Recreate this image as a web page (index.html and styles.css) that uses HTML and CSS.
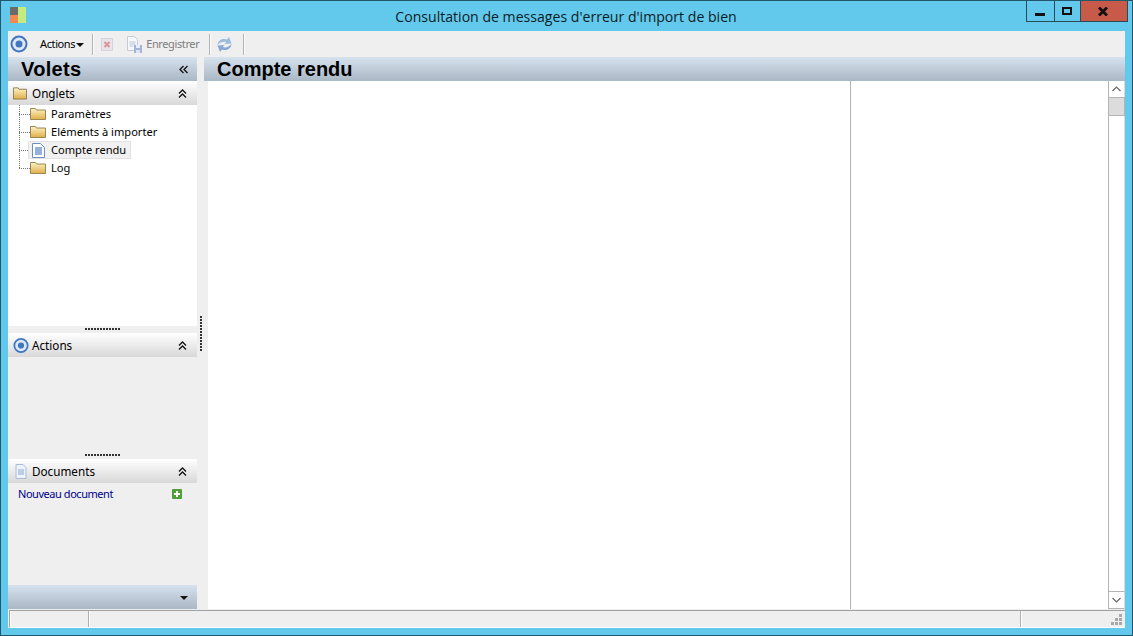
FILE: index.html
```html
<!DOCTYPE html>
<html lang="fr">
<head>
<meta charset="utf-8">
<title>Consultation de messages d'erreur d'import de bien</title>
<link rel="stylesheet" href="styles.css">
</head>
<body>
<div class="window">
  <header class="titlebar">
    <svg class="app-logo" width="16" height="16" viewBox="0 0 16 16"><rect x="0" y="0" width="8" height="8" fill="#6b6b6b"/><rect x="0" y="8" width="8" height="8" fill="#f08a50"/><rect x="8" y="0" width="8" height="16" fill="#c4ea80"/></svg>
    <div class="title">Consultation de messages d'erreur d'import de bien</div>
    <div class="controls">
      <div class="ctl ctl-min"><span class="min-glyph"></span></div>
      <div class="ctl ctl-max"><span class="max-glyph"></span></div>
      <div class="ctl ctl-close">
        <svg width="10" height="9" viewBox="0 0 10 9"><path d="M1 .5 9 8.500M9 .5 1 8.500" stroke="#111" stroke-width="2.800" fill="none"/></svg>
      </div>
    </div>
  </header>
  <div class="client">
    <div class="toolbar">
      <svg class="tb-target" width="18" height="18" viewBox="0 0 18 18"><use href="#target"/></svg>
      <span class="tb-actions">Actions</span><span class="caret"></span>
      <span class="sep sep-a"></span>
      <svg class="tb-delete" width="14" height="15" viewBox="0 0 14 15"><path d="M1.500 1.500h11v12h-11z" fill="#e9e4e8" stroke="#d4d2da"/><path d="M4.500 5l5 5M9.500 5l-5 5" stroke="#dd929b" stroke-width="2"/></svg>
      <svg class="tb-save" width="17" height="17" viewBox="0 0 17 17"><path d="M1.500 .5h7l3 3v11h-10z" fill="#f4f7fb" stroke="#c3ccd8"/><path d="M3.500 6h6M3.500 8h6M3.500 10h4" stroke="#b9c6d8"/><rect x="8" y="9" width="8" height="8" fill="#a3b5d6"/><rect x="10" y="9" width="4" height="3" fill="#e8edf5"/><rect x="10" y="14" width="4" height="3" fill="#dfe5f0"/></svg>
      <span class="tb-save-label">Enregistrer</span>
      <span class="sep sep-b"></span>
      <svg class="tb-refresh" width="17" height="17" viewBox="0 0 17 17"><path d="M1.500 9C1.800 4.500 6 1.800 11 3.500L13 1l2.500 6.500-7 .5 1.800-2C7 5 4 6 1.500 9z" fill="#9dbbdc"/><path d="M15.500 8C15.200 12.500 11 15.200 6 13.500L4 16l-2.500-6.500 7-.5L6.700 11C10 12 13 11 15.500 8z" fill="#86a9d2"/></svg>
      <span class="sep sep-c"></span>
    </div>
    <div class="workspace">
      <aside class="panes">
        <div class="panes-head"><span class="panes-title">Volets</span><svg class="chev-left" width="9" height="9" viewBox="0 0 9 9"><path d="M4.500 1 1 4.500 4.500 8M8.500 1 5 4.500 8.500 8" fill="none" stroke="#111" stroke-width="1.300"/></svg></div>
        <div class="pane-head">
          <svg class="ph-icon ph-folder" width="15" height="14" viewBox="0 0 15 14"><use href="#folder"/></svg>
          <span class="pane-label">Onglets</span><span class="chev-up"><svg width="9" height="9" viewBox="0 0 9 9"><path d="M1 4.500 4.500 1 8 4.500M1 8.500 4.500 5 8 8.500" fill="none" stroke="#111" stroke-width="1.300"/></svg></span>
        </div>
        <div class="tree">
          <div class="tree-line"></div>
          <div class="tree-item"><svg class="folder" width="16" height="12" viewBox="0 0 16 12"><use href="#folder2"/></svg><span class="tree-text">Paramètres</span></div>
          <div class="tree-item"><svg class="folder" width="16" height="12" viewBox="0 0 16 12"><use href="#folder2"/></svg><span class="tree-text">Eléments à importer</span></div>
          <div class="tree-item tree-selected"><span class="sel-box"><svg class="doc" width="13" height="15" viewBox="0 0 13 15"><path d="M.5 .5h8l4 4v10H.5z" fill="#fff" stroke="#6d8fbf"/><path d="M3 5h7M3 7h7M3 9h7M3 11h7" stroke="#2f63bd"/></svg><span class="tree-text">Compte rendu</span></span></div>
          <div class="tree-item"><svg class="folder" width="16" height="12" viewBox="0 0 16 12"><use href="#folder2"/></svg><span class="tree-text">Log</span></div>
        </div>
        <div class="grip"><span class="grip-dots"></span></div>
        <div class="pane-head">
          <svg class="ph-icon" width="17" height="17" viewBox="0 0 18 18"><use href="#target"/></svg>
          <span class="pane-label">Actions</span><span class="chev-up"><svg width="9" height="9" viewBox="0 0 9 9"><path d="M1 4.500 4.500 1 8 4.500M1 8.500 4.500 5 8 8.500" fill="none" stroke="#111" stroke-width="1.300"/></svg></span>
        </div>
        <div class="actions-body"></div>
        <div class="grip"><span class="grip-dots"></span></div>
        <div class="pane-head">
          <svg class="ph-icon" width="14" height="15" viewBox="0 0 15 15"><path d="M2.500 .5h7l3 3v11h-10z" fill="#eef3fb" stroke="#a9bcdc"/><path d="M4.500 6h6M4.500 8h6M4.500 10h6" stroke="#8aa6d4"/></svg>
          <span class="pane-label">Documents</span><span class="chev-up"><svg width="9" height="9" viewBox="0 0 9 9"><path d="M1 4.500 4.500 1 8 4.500M1 8.500 4.500 5 8 8.500" fill="none" stroke="#111" stroke-width="1.300"/></svg></span>
        </div>
        <div class="docs-body">
          <span class="new-doc">Nouveau document</span>
          <svg class="plus" width="10" height="10" viewBox="0 0 10 10"><rect width="10" height="10" rx="1" fill="#4f9e3a"/><path d="M5 2v6M2 5h6" stroke="#fff" stroke-width="2"/></svg>
        </div>
        <div class="panes-foot"><span class="caret caret-foot"></span></div>
      </aside>
      <div class="splitter"><span class="splitter-dots"></span></div>
      <main class="content">
        <div class="content-head">Compte rendu</div>
        <div class="content-body">
          <div class="grid">
            <div class="col-a"></div>
            <div class="col-b"></div>
          </div>
          <div class="scrollbar">
            <div class="sb-btn"><svg width="9" height="6" viewBox="0 0 9 6"><path d="M.5 5 4.500 1 8.500 5" fill="none" stroke="#666" stroke-width="1.200"/></svg></div>
            <div class="sb-thumb"></div>
            <div class="sb-track"></div>
            <div class="sb-btn sb-btn-down"><svg width="9" height="6" viewBox="0 0 9 6"><path d="M.5 1 4.500 5 8.500 1" fill="none" stroke="#666" stroke-width="1.200"/></svg></div>
          </div>
        </div>
      </main>
    </div>
    <footer class="statusbar">
      <div class="cell cell-a"></div>
      <div class="cell cell-b"></div>
      <div class="cell cell-c">
        <svg class="resize" width="11" height="11" viewBox="0 0 11 11"><path d="M8 0h3v3H8zM4 4h3v3H4zM8 4h3v3H8zM0 8h3v3H0zM4 8h3v3H4zM8 8h3v3H8z" fill="#a8a8a8"/></svg>
      </div>
    </footer>
  </div>
</div>
<svg class="defs" width="0" height="0">
  <defs>
    <linearGradient id="fg" x1="0" y1="0" x2="0" y2="1"><stop offset="0" stop-color="#fdf3c6"/><stop offset="1" stop-color="#e0ae48"/></linearGradient>
    <g id="folder"><path d="M.5 13.500V1.500h5l1 1.500h8v10.500z" fill="url(#fg)" stroke="#8c7a4e"/></g>
    <g id="folder2"><path d="M.5 11.500V.5h5l1 1.500h9v9.500z" fill="url(#fg)" stroke="#9a8652"/></g>
    <g id="target"><circle cx="9" cy="9" r="7.500" fill="#dfe9f6" stroke="#3f76c0" stroke-width="2"/><circle cx="9" cy="9" r="3.500" fill="#3f76c0"/></g>
  </defs>
</svg>
</body>
</html>
```
FILE: styles.css
```css
* { box-sizing: border-box; }
html, body { margin: 0; padding: 0; }
body { font-family: "Noto Sans", "Liberation Sans", sans-serif; font-size: 11px; color: #000; overflow: hidden; }
.defs { position: absolute; }
.window { width: 1133px; height: 636px; background: #63c9ec; border: 1px solid #24566b; display: flex; flex-direction: column; }
.titlebar { height: 30px; flex: none; display: flex; align-items: flex-start; }
.app-logo { margin: 6px 0 0 9px; flex: none; }
.title { flex: 1; text-align: center; font-family: "Open Sans", sans-serif; font-size: 14.100px; line-height: 20px; margin-top: 6px; padding-left: 80px; color: #0c1c24; }
.controls { display: flex; height: 21px; margin-right: 4px; border: 1px solid #2b4a58; border-top: 0; flex: none; }
.ctl { display: flex; align-items: center; justify-content: center; height: 20px; }
.ctl-min { width: 28px; padding-right: 2px; border-right: 1px solid #2b4a58; }
.ctl-max { width: 26px; padding-right: 2px; border-right: 1px solid #2b4a58; }
.ctl-close { width: 46px; padding-right: 2px; background: #c85a4a; }
.min-glyph { width: 10px; height: 3px; background: #111; margin-top: 6px; }
.max-glyph { width: 10px; height: 8px; border: 2px solid #111; }
.client { flex: 1; margin: 0 7px 7px; display: flex; flex-direction: column; background: #efefef; min-height: 0; }
.toolbar { height: 26px; flex: none; display: flex; align-items: center; background: #efefef; color: #000; letter-spacing: -.38px; }
.tb-target { margin-left: 2px; flex: none; }
.tb-actions { margin: -2px 0 0 12px; }
.caret { display: inline-block; width: 0; height: 0; border-left: 4px solid transparent; border-right: 4px solid transparent; border-top: 4px solid #111; }
.toolbar .caret { margin-left: 1px; margin-top: 1px; }
.sep { width: 2px; height: 21px; background: linear-gradient(90deg, #b4b4b4 50%, #fafafa 50%); flex: none; }
.sep-a { margin-left: 8px; }
.tb-delete { margin-left: 6px; flex: none; }
.tb-save { margin-left: 12px; flex: none; }
.tb-save-label { margin: -2px 0 0 3px; color: #7d7d7d; }
.sep-b { margin-left: 10px; }
.tb-refresh { margin-left: 5px; flex: none; }
.sep-c { margin-left: 10px; }
.workspace { flex: 1; display: flex; min-height: 0; }
.panes { width: 189px; flex: none; display: flex; flex-direction: column; }
.panes-head { height: 24px; flex: none; display: flex; align-items: center; justify-content: space-between; padding: 0 9px 0 13px; background: linear-gradient(#d6e2ee, #aab7c4); }
.panes-title { font-family: "Liberation Sans", sans-serif; font-size: 20px; font-weight: bold; letter-spacing: .3px; }
.chev-left { flex: none; }
.pane-head { height: 24px; flex: none; display: flex; align-items: center; padding-left: 5px; padding-right: 10px; background: linear-gradient(#fff, #d8d8d8); }
.ph-icon { flex: none; width: 16px; }
.ph-folder { width: 14px; margin-right: 2px; }
.pane-label { margin-left: 3px; flex: 1; font-size: 11.700px; }
.chev-up { display: flex; }
.tree { height: 221px; flex: none; background: #fff; position: relative; }
.tree-line { position: absolute; left: 11px; top: 0; width: 10px; height: 63px; border-left: 1px dotted #777; }
.tree-item { height: 18px; display: flex; align-items: center; padding-left: 22px; position: relative; }
.tree-item::before { content: ""; position: absolute; left: 11px; top: 9px; width: 11px; border-top: 1px dotted #777; }
.folder { flex: none; }
.tree-text { margin: -2px 0 0 5px; font-size: 11.100px; }
.tree-selected { padding-left: 20px; }
.sel-box { display: flex; align-items: center; height: 18px; background: #f1f1f1; border: 1px solid #e2e2e2; padding-right: 4px; padding-left: 3px; position: relative; }
.sel-box .tree-text { margin-left: 6px; }
.doc { flex: none; }
.grip { height: 7px; flex: none; background: #efefef; display: flex; justify-content: center; align-items: flex-start; }
.grip-dots { width: 35px; height: 2px; background: repeating-linear-gradient(90deg, #333 0 2px, transparent 2px 3px); margin-top: 2px; }
.actions-body { flex: none; height: 95px; background: #efefef; }
.docs-body { flex: 1; background: #efefef; display: flex; align-items: flex-start; justify-content: space-between; padding: 4px 15px 0 10px; }
.new-doc { color: #00008b; line-height: 14px; letter-spacing: -.45px; }
.plus { margin-top: 2px; }
.panes-foot { height: 24px; flex: none; display: flex; align-items: center; justify-content: flex-end; padding-right: 9px; background: linear-gradient(#d6e2ee, #aab7c4); }
.caret-foot { margin-top: 2px; }
.splitter { width: 7px; flex: none; display: flex; align-items: center; justify-content: center; }
.splitter-dots { width: 2px; height: 35px; background: repeating-linear-gradient(#333 0 2px, transparent 2px 3px); }
.content { flex: 1; min-width: 0; display: flex; flex-direction: column; }
.content-head { height: 24px; flex: none; display: flex; align-items: center; padding-left: 13px; background: linear-gradient(#d6e2ee, #aab7c4); font-family: "Liberation Sans", sans-serif; font-size: 20px; font-weight: bold; }
.content-body { flex: 1; display: flex; margin-left: 4px; min-height: 0; }
.grid { flex: 1; display: flex; background: #fff; }
.col-a { width: 643px; border-right: 1px solid #b4b4b4; }
.col-b { flex: 1; }
.scrollbar { width: 17px; flex: none; display: flex; flex-direction: column; background: #fff; border-left: 1px solid #b4b4b4; }
.sb-btn { height: 16px; flex: none; display: flex; align-items: center; justify-content: center; border-right: 1px solid #dcdcdc; background: #fff; }
.sb-btn-down { height: 18px; border-top: 1px solid #b4b4b4; border-bottom: 1px solid #b4b4b4; }
.sb-thumb { height: 19px; flex: none; background: #dcdcdc; border: 1px solid #b4b4b4; border-left: 0; }
.sb-track { flex: 1; border-right: 1px solid #dcdcdc; }
.statusbar { height: 18px; margin: 1px 0 0 1px; flex: none; display: flex; border-top: 1px solid #a0a0a0; border-bottom: 1px solid #fff; border-left: 1px solid #a0a0a0; background: #efefef; }
.cell { border-right: 1px solid #b0b0b0; border-left: 1px solid #fff; }
.cell-a { width: 79px; }
.cell-b { width: 932px; }
.cell-c { flex: 1; border-right: 0; display: flex; align-items: flex-end; justify-content: flex-end; padding: 0 3px 2px 0; }
```
